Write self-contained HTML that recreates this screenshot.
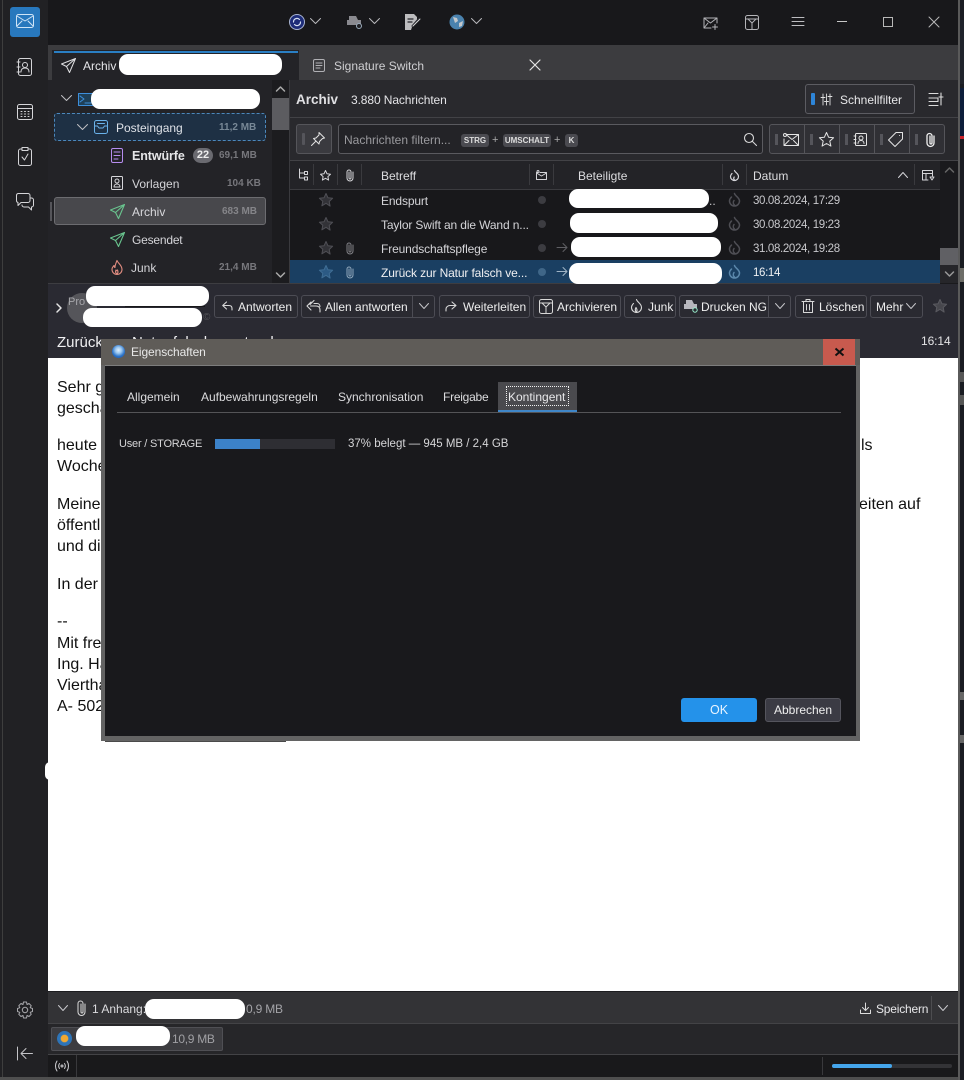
<!DOCTYPE html>
<html lang="de"><head><meta charset="utf-8"><title>Archiv</title>
<style>
*{box-sizing:border-box}
html,body{margin:0;padding:0;width:964px;height:1080px;overflow:hidden;background:#17171a}
body{position:relative;font-family:"Liberation Sans",sans-serif;font-size:12px;color:#e8e8ea}
.b{position:absolute}
.t{position:absolute;white-space:nowrap;line-height:16px;height:16px}
.w{position:absolute;background:#fff;border-radius:9px}
.btn{position:absolute;top:295px;height:23px;border:1px solid #4c4c54;border-radius:3px;background:#2a2a31}
.bt{position:absolute;white-space:nowrap;line-height:16px;top:299px;font-size:12px;color:#eee}
.dim{color:#77777c;font-weight:bold;font-size:10px}
.m{position:absolute;left:57px;font-size:16px;line-height:20px;color:#111;white-space:nowrap}
.kbd{position:absolute;top:134px;height:13px;background:#4a4a50;border-radius:3px;font-size:8px;font-weight:bold;line-height:13px;text-align:center;color:#dcdcdc}
.r{font-size:12px;letter-spacing:-.13px}
.d{font-size:11.5px;letter-spacing:-.35px}
svg{position:absolute;overflow:visible;fill:none;stroke-linecap:round;stroke-linejoin:round}
</style></head><body>

<!-- frame -->
<div class="b" style="left:0;top:0;width:48px;height:1080px;background:#212124"></div>
<div class="b" style="left:2px;top:0;width:1px;height:1080px;background:#3e3e3e"></div>
<div class="b" style="left:48px;top:0;width:910px;height:45px;background:#18181b"></div>
<div class="b" style="left:48px;top:45px;width:910px;height:35px;background:#3c3c3f"></div>
<div class="b" style="left:48px;top:80px;width:224px;height:204px;background:#232327"></div>
<div class="b" style="left:272px;top:80px;width:18px;height:204px;background:#1c1c1f"></div>
<div class="b" style="left:290px;top:80px;width:668px;height:37px;background:#29292d"></div>
<div class="b" style="left:290px;top:117px;width:668px;height:1px;background:#424246"></div>
<div class="b" style="left:290px;top:118px;width:668px;height:42px;background:#29292d"></div>
<div class="b" style="left:290px;top:160px;width:668px;height:1px;background:#424246"></div>
<div class="b" style="left:290px;top:161px;width:668px;height:29px;background:#232327"></div>
<div class="b" style="left:290px;top:189px;width:650px;height:1px;background:#3b3b3f"></div>
<div class="b" style="left:290px;top:190px;width:668px;height:94px;background:#18181b"></div>
<div class="b" style="left:48px;top:283px;width:910px;height:1px;background:#3d3d41"></div>
<div class="b" style="left:48px;top:284px;width:910px;height:74px;background:#2a2a32"></div>
<div class="b" style="left:48px;top:358px;width:910px;height:633px;background:#fff"></div>
<div class="b" style="left:48px;top:991px;width:910px;height:33px;background:#333336;border-top:1px solid #1d1d20"></div>
<div class="b" style="left:48px;top:1023px;width:910px;height:32px;background:#262629;border-top:1px solid #434346"></div>
<div class="b" style="left:48px;top:1054px;width:910px;height:23px;background:#19191b;border-top:1px solid #434346"></div>
<div class="b" style="left:0;top:1077px;width:964px;height:3px;background:#4f4f4f"></div>
<div class="b" style="left:958px;top:0;width:2px;height:1080px;background:#5a5a5a"></div>
<div class="b" style="left:960px;top:0;width:4px;height:1080px;background:#1a1c22"></div>
<div class="b" style="left:960px;top:20px;width:4px;height:64px;background:#20232b"></div>
<div class="b" style="left:960px;top:88px;width:4px;height:50px;background:#0d1d3a"></div>
<div class="b" style="left:960px;top:136px;width:4px;height:3px;background:#c8202a"></div>
<div class="b" style="left:960px;top:268px;width:4px;height:14px;background:#6d6d68"></div>
<div class="b" style="left:960px;top:372px;width:4px;height:10px;background:#565656"></div>
<div class="b" style="left:960px;top:395px;width:4px;height:10px;background:#565656"></div>
<div class="b" style="left:960px;top:692px;width:4px;height:8px;background:#666"></div>
<div class="b" style="left:960px;top:735px;width:4px;height:8px;background:#666"></div>

<!-- spaces bar -->
<div class="b" style="left:10px;top:7px;width:30px;height:30px;background:#2878bd;border-radius:3px"></div>
<svg style="left:16px;top:14px" width="18" height="16" stroke="#cfe4f6" stroke-width="1"><rect x=".5" y=".5" width="17" height="13" rx="2"/><path d="M1 2l8 5 8-5M1 12l5-5M17 12l-5-5"/></svg>
<svg style="left:17px;top:58px" width="16" height="18" stroke="#d5d5d8" stroke-width="1"><rect x="1.500" y=".5" width="13" height="17" rx="2"/><circle cx="8" cy="7" r="2.500"/><path d="M4 14c0-3 2-4 4-4s4 1 4 4M0 4h3M0 9h3M0 14h3"/></svg>
<svg style="left:17px;top:104px" width="16" height="16" stroke="#d5d5d8" stroke-width="1"><rect x=".5" y=".5" width="15" height="15" rx="2"/><path d="M1 4.500h14M4 7.500h1M7.500 7.500h1M11 7.500h1M4 10h1M7.500 10h1M11 10h1M4 12.500h1M7.500 12.500h1M11 12.500h1"/></svg>
<svg style="left:18px;top:147px" width="14" height="19" stroke="#d5d5d8" stroke-width="1"><rect x=".5" y="2" width="13" height="16.500" rx="2"/><rect x="4" y=".5" width="6" height="3" fill="#212124"/><path d="M4 10l2.500 3L10 7"/></svg>
<svg style="left:16px;top:193px" width="18" height="18" stroke="#d5d5d8" stroke-width="1"><path d="M2 .5h10a2 2 0 0 1 2 2v5a2 2 0 0 1-2 2H5l-3 3v-3a2 2 0 0 1-1.500-2v-5a2 2 0 0 1 1.500-2z"/><path d="M14 5h1.500a2 2 0 0 1 2 2v5a2 2 0 0 1-2 2v3l-3-3H8a2 2 0 0 1-2-2"/></svg>
<svg style="left:16px;top:1001px" width="18" height="18" stroke="#a8a8ac" stroke-width="1"><path d="M7.500 1h3l.5 2.500 2-1 2.200 2.200-1 2 2.300.800v3l-2.300.8 1 2-2.200 2.200-2-1-.5 2.500h-3l-.5-2.500-2 1L2.800 13.300l1-2L1.500 10.500v-3l2.300-.8-1-2L5 2.500l2 1z"/><circle cx="9" cy="9" r="2.700"/></svg>
<svg style="left:17px;top:1047px" width="16" height="14" stroke="#c4c4c8" stroke-width="1"><path d="M.5 0v13M15.500 6.500H4M9 1.500l-5 5 5 5"/></svg>

<!-- top bar icons -->
<svg style="left:289px;top:14px" width="16" height="16"><circle cx="8" cy="8" r="7.500" fill="#1d2c78" stroke="#a9b4d2"/><path d="M4.500 8a3.500 3.500 0 0 1 6-2.500M11.500 8a3.500 3.500 0 0 1-6 2.500" stroke="#d5def2" stroke-width="1.200"/></svg>
<svg style="left:310px;top:18px" width="11" height="7" stroke="#b8b8bc"><path d="M.5.500l5 5 5-5"/></svg>
<svg style="left:346px;top:14px" width="17" height="16"><path d="M3 2h7l2 4h3v5H1V6h2z" fill="#8a8a90"/><circle cx="13" cy="12" r="2.500" fill="#202024" stroke="#9ab"/></svg>
<svg style="left:369px;top:18px" width="11" height="7" stroke="#b8b8bc"><path d="M.5.500l5 5 5-5"/></svg>
<svg style="left:405px;top:14px" width="17" height="16"><path d="M0 0h9l3 3v4l-5 6-1 3H0z" fill="#bdbdbf"/><path d="M7 12l7-8M3 5h5M3 8h4" stroke="#24242a" stroke-width="1.200"/><path d="M8 12l7-7" stroke="#d8d8d8"/></svg>
<svg style="left:449px;top:14px" width="16" height="16"><circle cx="8" cy="8" r="7.500" fill="#4a82ae"/><path d="M4 3l4 1 1 3-3 2zM10 9l4-2-1 5-3 1z" fill="#c4c8cc"/></svg>
<svg style="left:471px;top:18px" width="11" height="7" stroke="#b8b8bc"><path d="M.5.500l5 5 5-5"/></svg>
<svg style="left:703px;top:17px" width="15" height="13" stroke="#b4b4b8"><path d="M14 6V1H1v10h7M1 1l6.500 5L14 1M1 11l4-5"/><path d="M12 7.500v5M9.500 10h5"/></svg>
<svg style="left:745px;top:15px" width="14" height="15" stroke="#b4b4b8"><rect x=".5" y=".5" width="13" height="14" rx="2"/><path d="M.5 4h13M3 4l4 4 4-4M7 8v6"/></svg>
<svg style="left:792px;top:17px" width="12" height="10" stroke="#bcbcc0"><path d="M0 .5h12M0 4.500h12M0 8.500h12"/></svg>
<div class="b" style="left:837px;top:21px;width:10px;height:1px;background:#c8c8c8"></div>
<div class="b" style="left:883px;top:17px;width:10px;height:10px;border:1px solid #b8b8b8"></div>
<svg style="left:929px;top:17px" width="10" height="10" stroke="#b8b8b8"><path d="M0 0l10 10M10 0L0 10"/></svg>

<!-- tabs -->
<div class="b" style="left:52px;top:50px;width:247px;height:30px;background:#232327"></div>
<div class="b" style="left:54px;top:51px;width:244px;height:2px;background:#2a7fc4"></div>
<svg style="left:61px;top:58px" width="15" height="15" stroke="#dedee0" stroke-width="1"><path d="M14.500.500L.5 6l5 2.500L8.500 14.500zM5.500 8.500L14.500.500"/></svg>
<div class="t" style="left:83px;top:58px;font-size:12px;color:#e5e5e8">Archiv</div>
<svg style="left:313px;top:59px" width="12" height="13" stroke="#b0b0b4"><rect x=".5" y=".5" width="11" height="12" rx="1.500"/><path d="M3 4h6M3 6.500h6M3 9h4"/></svg>
<div class="t" style="left:334px;top:58px;font-size:12px;color:#cfcfd2">Signature Switch</div>
<svg style="left:530px;top:60px" width="10" height="10" stroke="#e4e4e4" stroke-width="1.200"><path d="M0 0l10 10M10 0L0 10"/></svg>
<div class="w" style="left:119px;top:54px;width:163px;height:21px"></div>

<!-- folder pane -->
<div class="b" style="left:54px;top:113px;width:212px;height:28px;background:#1e3044;border:1px dashed #4c88bc;border-radius:3px"></div>
<div class="b" style="left:54px;top:197px;width:212px;height:28px;background:#48484c;border:1px solid #6c6c70;border-radius:3px"></div>
<div class="b" style="left:50px;top:202px;width:2px;height:19px;background:#55555a"></div>
<svg style="left:61px;top:95px" width="11" height="7" stroke="#c0c0c4"><path d="M.5.500l5 5 5-5"/></svg>
<svg style="left:78px;top:93px" width="16" height="13" stroke="#3d8fdc"><rect x=".5" y=".5" width="15" height="12" fill="#1f4058"/><path d="M2 3l4 3-4 3M7 10h6"/></svg>
<div class="w" style="left:91px;top:89px;width:169px;height:20px"></div>
<svg style="left:77px;top:124px" width="11" height="7" stroke="#c0c0c4"><path d="M.5.500l5 5 5-5"/></svg>
<svg style="left:94px;top:120px" width="14" height="14" stroke="#6ab2ea" stroke-width="1"><rect x=".5" y=".5" width="13" height="13" rx="2"/><path d="M.5 6h3l1.500 2h4l1.500-2h3M3.500 3.500h7"/></svg>
<div class="t" style="left:116px;top:120px;font-size:12px;color:#dfe2e8">Posteingang</div>
<div class="t dim" style="left:219px;top:120px;color:#788896">11,2 MB</div>
<svg style="left:111px;top:148px" width="12" height="15" stroke="#b78df0" stroke-width="1"><rect x=".5" y=".5" width="11" height="14" rx="1.500"/><path d="M3 4h6M3 7.500h6M3 11h4"/></svg>
<div class="t" style="left:132px;top:148px;font-size:12.500px;letter-spacing:-.1px;font-weight:bold;color:#e6e6e8">Entwürfe</div>
<div class="b" style="left:193px;top:148px;width:20px;height:15px;border-radius:8px;background:#6a6a70;color:#eee;font-size:11px;font-weight:bold;line-height:15px;text-align:center">22</div>
<div class="t dim" style="left:219px;top:148px">69,1 MB</div>
<svg style="left:111px;top:176px" width="12" height="14" stroke="#d6d6da" stroke-width="1"><rect x=".5" y=".5" width="11" height="13" rx="1"/><circle cx="6" cy="5" r="2"/><path d="M3 11c0-2 1.500-3 3-3s3 1 3 3z"/></svg>
<div class="t" style="left:132px;top:176px;font-size:12px;color:#d4d4d8">Vorlagen</div>
<div class="t dim" style="left:227px;top:176px">104 KB</div>
<svg style="left:110px;top:204px" width="15" height="15" stroke="#69c48e" stroke-width="1.100"><path d="M14.500.500L.5 6l5 2.500L8.500 14.500zM5.500 8.500L14.500.500"/></svg>
<div class="t" style="left:132px;top:204px;font-size:12px;color:#d8d8dc">Archiv</div>
<div class="t dim" style="left:222px;top:204px;color:#858589">683 MB</div>
<svg style="left:110px;top:232px" width="15" height="15" stroke="#69c48e" stroke-width="1.100"><path d="M14.500.500L.5 6l5 2.500L8.500 14.500zM5.500 8.500L14.500.500"/></svg>
<div class="t" style="left:132px;top:232px;font-size:12px;letter-spacing:-.2px;color:#d4d4d8">Gesendet</div>
<svg style="left:111px;top:260px" width="12" height="15" stroke="#e08c80" stroke-width="1.100"><path d="M6 .5c1 3 5 4.500 5 9a5 5 0 0 1-10 0c0-2 1-3 2-4 0 1 .5 2 1 2C4 5 5 3 6 .5zM6 14c-1.500-1-2-2-1-4 .5 1 1 1 1.500 0 1 2 .5 3-.5 4z"/></svg>
<div class="t" style="left:131px;top:260px;font-size:12px;color:#d4d4d8">Junk</div>
<div class="t dim" style="left:219px;top:260px">21,4 MB</div>
<!-- folder scrollbar -->
<div class="b" style="left:272px;top:98px;width:17px;height:32px;background:#5c5c60"></div>
<svg style="left:276px;top:86px" width="9" height="6" stroke="#aaa" stroke-width="1.500"><path d="M.5 5L4.500 1l4 4"/></svg>
<svg style="left:276px;top:272px" width="9" height="6" stroke="#aaa" stroke-width="1.500"><path d="M.5 1l4 4 4-4"/></svg>
<div class="b" style="left:289px;top:80px;width:1px;height:204px;background:#3a3a3e"></div>

<!-- thread pane header -->
<div class="t" style="left:296px;top:92px;font-size:13.500px;font-weight:bold;color:#e0e0e3">Archiv</div>
<div class="t" style="left:351px;top:92px;font-size:12px;letter-spacing:-.1px;color:#e4e4e7">3.880 Nachrichten</div>
<div class="b" style="left:805px;top:84px;width:110px;height:30px;border:1px solid #5c5c62;border-radius:3px;background:#2d2d32"></div>
<div class="b" style="left:811px;top:93px;width:4px;height:12px;background:#2e85d8;border-radius:1px"></div>
<svg style="left:821px;top:94px" width="11" height="11" stroke="#dedede" stroke-width=".9"><path d="M2 0v11M5.500 0v11M9 0v11M0 3.500h4M3.500 7.500h4M7 2.500h4"/></svg>
<div class="t" style="left:840px;top:92px;font-size:12px;color:#e8e8ea">Schnellfilter</div>
<svg style="left:929px;top:93px" width="14" height="13" stroke="#dcdcdc" stroke-width="1.100"><path d="M0 .5h9M0 12.500h9M0 5h9v3.500H0M12 0v12M10 4h4"/></svg>

<!-- filter bar -->
<div class="b" style="left:296px;top:124px;width:36px;height:30px;background:#3a3a3f;border:1px solid #55555a;border-radius:3px"></div>
<div class="b" style="left:302px;top:133px;width:3px;height:12px;background:#55555b;border-radius:1px"></div>
<svg style="left:311px;top:132px" width="14" height="14" stroke="#e2e2e2"><path d="M8 .5l5.500 5.500-2 .5-3 3-.5 2.500L2.500 6.500 5 6l3-3zM5 9l-4.500 4.500"/></svg>
<div class="b" style="left:338px;top:124px;width:425px;height:30px;background:#232327;border:1px solid #5a5a5f;border-radius:3px"></div>
<div class="t" style="left:344px;top:132px;font-size:12px;color:#9a9a9e">Nachrichten filtern...</div>
<div class="kbd" style="left:461px;width:28px">STRG</div>
<div class="t" style="left:492px;top:132px;font-size:11px;color:#aaa">+</div>
<div class="kbd" style="left:503px;width:48px">UMSCHALT</div>
<div class="t" style="left:554px;top:132px;font-size:11px;color:#aaa">+</div>
<div class="kbd" style="left:565px;width:13px">K</div>
<svg style="left:744px;top:133px" width="13" height="13" stroke="#d8d8d8" stroke-width="1.100"><circle cx="5" cy="5" r="4.500"/><path d="M8.500 8.500L12.500 12.500"/></svg>
<div class="b" style="left:769px;top:124px;width:176px;height:30px;background:#303035;border:1px solid #55555a;border-radius:3px"></div>
<div class="b" style="left:804px;top:125px;width:1px;height:28px;background:#55555a"></div>
<div class="b" style="left:839px;top:125px;width:1px;height:28px;background:#55555a"></div>
<div class="b" style="left:874px;top:125px;width:1px;height:28px;background:#55555a"></div>
<div class="b" style="left:909px;top:125px;width:1px;height:28px;background:#55555a"></div>
<div class="b" style="left:775px;top:134px;width:3px;height:11px;background:#55555b"></div>
<div class="b" style="left:810px;top:134px;width:3px;height:11px;background:#55555b"></div>
<div class="b" style="left:845px;top:134px;width:3px;height:11px;background:#55555b"></div>
<div class="b" style="left:880px;top:134px;width:3px;height:11px;background:#55555b"></div>
<div class="b" style="left:915px;top:134px;width:3px;height:11px;background:#55555b"></div>
<svg style="left:783px;top:133px" width="16" height="13" stroke="#e4e4e4"><path d="M3 1.500h12.500v11H1V6M3 1.500l6 5 6.500-5M1 12.500l5-5M15.500 12.500l-5-5"/><circle cx="2" cy="2" r="1.500"/></svg>
<svg style="left:819px;top:132px" width="15" height="15" stroke="#e4e4e4"><path d="M7.500.5l2.100 4.700 5 .5-3.800 3.400 1.100 5-4.400-2.600-4.400 2.600 1.100-5L.4 5.700l5-.5z"/></svg>
<svg style="left:854px;top:133px" width="13" height="13" stroke="#e4e4e4"><rect x="1.500" y=".5" width="11" height="12" rx="1"/><circle cx="7" cy="5" r="2"/><path d="M4 10.500c0-2 1.500-3 3-3s3 1 3 3M0 3h2M0 6.500h2M0 10h2"/></svg>
<svg style="left:888px;top:132px" width="15" height="15" stroke="#e4e4e4"><path d="M8 .5h6.500V7L7 14.500.5 8zM11.500 3.500h.1"/></svg>
<svg style="left:926px;top:132px" width="10" height="15" stroke="#f0f0f0" stroke-width="1.300"><path d="M8 4v7a3.500 3.500 0 0 1-7 0V4a2.500 2.500 0 0 1 5 0v7a1 1 0 0 1-2 0V4"/></svg>

<!-- column header -->
<svg style="left:298px;top:169px" width="11" height="13" stroke="#d4d4d8"><path d="M1.500 0v9h5M1.500 4h5"/><rect x="6.500" y="2.500" width="3" height="3"/><rect x="6.500" y="8" width="3" height="3"/></svg>
<svg style="left:320px;top:170px" width="11" height="11" stroke="#d4d4d8"><path d="M5.500.5l1.500 3.300 3.500.4-2.600 2.400.7 3.500-3.100-1.800-3.100 1.800.7-3.500L.5 4.200 4 3.800z"/></svg>
<svg style="left:346px;top:169px" width="8" height="13" stroke="#d4d4d8"><path d="M7 3v6a3 3 0 0 1-6 0V3a2 2 0 0 1 4 0v6a1 1 0 0 1-2 0V3"/></svg>
<div class="b" style="left:313px;top:164px;width:1px;height:21px;background:#3a3a3e"></div>
<div class="b" style="left:337px;top:164px;width:1px;height:21px;background:#3a3a3e"></div>
<div class="b" style="left:361px;top:164px;width:1px;height:21px;background:#3a3a3e"></div>
<div class="t" style="left:381px;top:168px;font-size:12px;color:#dcdcdf">Betreff</div>
<div class="b" style="left:529px;top:164px;width:1px;height:21px;background:#3a3a3e"></div>
<div class="b" style="left:553px;top:164px;width:1px;height:21px;background:#3a3a3e"></div>
<svg style="left:536px;top:170px" width="11" height="10" stroke="#d4d4d8"><path d="M2 2.500H.5v7h10v-7H4M.5 3l5 3 5-3"/><circle cx="2" cy="1.500" r="1"/></svg>
<div class="t" style="left:578px;top:168px;font-size:12px;color:#dcdcdf">Beteiligte</div>
<div class="b" style="left:722px;top:164px;width:1px;height:21px;background:#3a3a3e"></div>
<div class="b" style="left:746px;top:164px;width:1px;height:21px;background:#3a3a3e"></div>
<svg style="left:730px;top:170px" width="9" height="11" stroke="#d4d4d8" stroke-width="1.200"><path d="M4.500.5c.5 2 4 3 4 6a4 4 0 0 1-8 0c0-1.500.8-2 1.500-3M4.500 10c-1-1-1-2-.3-3"/></svg>
<div class="t" style="left:753px;top:168px;font-size:12px;color:#dcdcdf">Datum</div>
<svg style="left:898px;top:172px" width="10" height="6" stroke="#d4d4d8"><path d="M.5 5.500l4.500-5 4.500 5"/></svg>
<div class="b" style="left:914px;top:164px;width:1px;height:21px;background:#3a3a3e"></div>
<svg style="left:922px;top:170px" width="12" height="11" stroke="#d4d4d8"><path d="M6 10H.5V.5h10V6M.5 3.500h10M4 3.500V10M8 7h4l-2 3z"/></svg>

<!-- rows -->
<div class="b" style="left:290px;top:260px;width:650px;height:23px;background:#1a3f62"></div>

<svg style="left:319px;top:193px" width="14" height="14" stroke="#4f4f55"><path d="M7 .5l2 4.300 4.600.5-3.400 3.200.9 4.600L7 10.300l-4.100 2.500.9-4.600L.4 5.300 5 4.800z" fill="#323237"/></svg>
<svg style="left:319px;top:217px" width="14" height="14" stroke="#4f4f55"><path d="M7 .5l2 4.300 4.600.5-3.400 3.200.9 4.600L7 10.300l-4.100 2.500.9-4.600L.4 5.300 5 4.800z" fill="#323237"/></svg>
<svg style="left:319px;top:241px" width="14" height="14" stroke="#4f4f55"><path d="M7 .5l2 4.300 4.600.5-3.400 3.200.9 4.600L7 10.300l-4.100 2.500.9-4.600L.4 5.300 5 4.800z" fill="#323237"/></svg>
<svg style="left:319px;top:265px" width="14" height="14" stroke="#3f6d94"><path d="M7 .5l2 4.300 4.600.5-3.400 3.200.9 4.600L7 10.300l-4.100 2.500.9-4.600L.4 5.300 5 4.800z" fill="#2c5a84"/></svg>
<svg style="left:346px;top:242px" width="8" height="13" stroke="#808086"><path d="M7 3v6a3 3 0 0 1-6 0V3a2 2 0 0 1 4 0v6a1 1 0 0 1-2 0V3"/></svg>
<svg style="left:346px;top:266px" width="8" height="13" stroke="#8fa6ba"><path d="M7 3v6a3 3 0 0 1-6 0V3a2 2 0 0 1 4 0v6a1 1 0 0 1-2 0V3"/></svg>
<div class="t r" style="left:381px;top:193px;color:#d4d4d8">Endspurt</div>
<div class="t r" style="left:381px;top:217px;color:#d4d4d8">Taylor Swift an die Wand n...</div>
<div class="t r" style="left:381px;top:241px;color:#d4d4d8">Freundschaftspflege</div>
<div class="t r" style="left:381px;top:265px;color:#f0f0f2">Zurück zur Natur falsch ve...</div>
<div class="b" style="left:538px;top:196px;width:8px;height:8px;border-radius:50%;background:#3c3c41"></div>
<div class="b" style="left:538px;top:220px;width:8px;height:8px;border-radius:50%;background:#3c3c41"></div>
<div class="b" style="left:538px;top:244px;width:8px;height:8px;border-radius:50%;background:#3c3c41"></div>
<div class="b" style="left:538px;top:268px;width:8px;height:8px;border-radius:50%;background:#3f6688"></div>
<svg style="left:557px;top:243px" width="11" height="9" stroke="#5f5f64"><path d="M0 4.500h10M6 .5l4 4-4 4"/></svg>
<svg style="left:557px;top:267px" width="11" height="9" stroke="#9fb4c6"><path d="M0 4.500h10M6 .5l4 4-4 4"/></svg>
<div class="t" style="left:709px;top:193px;font-size:12px;color:#c8c8cc">..</div>
<svg style="left:729px;top:193px" width="11" height="13" stroke="#4e4e54" stroke-width="1.500"><path d="M5.500.5c.5 2.500 5 4 5 7.500a5 5 0 0 1-10 0c0-2 1-3 2-4M5.500 12c-1.500-1-1.500-3-.5-4.500"/></svg>
<svg style="left:729px;top:217px" width="11" height="13" stroke="#4e4e54" stroke-width="1.500"><path d="M5.500.5c.5 2.500 5 4 5 7.500a5 5 0 0 1-10 0c0-2 1-3 2-4M5.500 12c-1.500-1-1.500-3-.5-4.500"/></svg>
<svg style="left:729px;top:241px" width="11" height="13" stroke="#4e4e54" stroke-width="1.500"><path d="M5.500.5c.5 2.500 5 4 5 7.500a5 5 0 0 1-10 0c0-2 1-3 2-4M5.500 12c-1.500-1-1.500-3-.5-4.500"/></svg>
<svg style="left:729px;top:265px" width="11" height="13" stroke="#5b87ab" stroke-width="1.500"><path d="M5.500.5c.5 2.500 5 4 5 7.500a5 5 0 0 1-10 0c0-2 1-3 2-4M5.500 12c-1.500-1-1.500-3-.5-4.500"/></svg>
<div class="t d" style="left:753px;top:193px;color:#c8c8cc">30.08.2024, 17:29</div>
<div class="t d" style="left:753px;top:217px;color:#c8c8cc">30.08.2024, 19:23</div>
<div class="t d" style="left:753px;top:241px;color:#c8c8cc">31.08.2024, 19:28</div>
<div class="t d" style="left:753px;top:265px;color:#eef0f2">16:14</div>
<div class="w" style="left:569px;top:189px;width:140px;height:19px"></div>
<div class="w" style="left:570px;top:213px;width:148px;height:20px"></div>
<div class="w" style="left:571px;top:237px;width:150px;height:20px"></div>
<div class="w" style="left:569px;top:263px;width:153px;height:21px"></div>
<!-- thread scrollbar -->
<div class="b" style="left:940px;top:161px;width:18px;height:123px;background:#1a1a1d"></div>
<div class="b" style="left:940px;top:248px;width:18px;height:17px;background:#606064"></div>
<div class="b" style="left:940px;top:265px;width:18px;height:18px;background:#26262a"></div>
<svg style="left:945px;top:167px" width="9" height="6" stroke="#666" stroke-width="1.500"><path d="M.5 5L4.500 1l4 4"/></svg>
<svg style="left:945px;top:271px" width="9" height="6" stroke="#999" stroke-width="1.500"><path d="M.5 1l4 4 4-4"/></svg>

<!-- message header -->
<svg style="left:56px;top:303px" width="7" height="10" stroke="#e4e4e4" stroke-width="1.500"><path d="M1 1l4 4-4 4"/></svg>
<div class="b" style="left:67px;top:293px;width:30px;height:30px;border-radius:50%;background:#55555a"></div>
<div class="t" style="left:68px;top:294px;font-size:11px;color:#a8a8ac">Pro</div>
<div class="w" style="left:86px;top:286px;width:123px;height:20px"></div>
<div class="b" style="left:125px;top:306px;width:80px;height:1px;background:#18181a"></div>
<div class="w" style="left:83px;top:308px;width:119px;height:19px"></div>
<div class="t" style="left:203px;top:310px;font-size:10px;color:#55555a">©</div>

<div class="btn" style="left:214px;width:84px"></div>
<svg style="left:222px;top:301px" width="11" height="11" stroke="#d8d8d8" stroke-width="1.100"><path d="M4.500 1L.7 4.500 4.500 8M1 4.500h6c2 0 3 1 3 3v1.500"/></svg>
<div class="bt" style="left:238px">Antworten</div>
<div class="btn" style="left:301px;width:134px"></div>
<div class="b" style="left:412px;top:296px;width:1px;height:21px;background:#4c4c54"></div>
<svg style="left:306px;top:300px" width="15" height="13" stroke="#d8d8d8" stroke-width="1.100"><path d="M5 2L1 6l4 4M8 .5L4 4.500M4.500 6H10c3 0 4 2 4 4v2M8 3.500h3c2 0 3 1.500 3 3"/></svg>
<div class="bt" style="left:325px">Allen antworten</div>
<svg style="left:419px;top:303px" width="10" height="6" stroke="#c4c4c8"><path d="M.5.500l4.500 5 4.500-5"/></svg>
<div class="btn" style="left:439px;width:91px"></div>
<svg style="left:445px;top:301px" width="12" height="11" stroke="#d8d8d8" stroke-width="1.100"><path d="M7 1l4 3.500L7 8M11 4.500H5C3 4.500 1 6 1 8v2"/></svg>
<div class="bt" style="left:463px">Weiterleiten</div>
<div class="btn" style="left:533px;width:88px"></div>
<svg style="left:539px;top:299px" width="14" height="15" stroke="#d8d8d8"><rect x=".5" y=".5" width="13" height="14" rx="2"/><path d="M.5 4h13M3 4l4 4 4-4M7 8v6"/></svg>
<div class="bt" style="left:557px">Archivieren</div>
<div class="btn" style="left:624px;width:52px"></div>
<svg style="left:631px;top:299px" width="11" height="14" stroke="#d8d8d8" stroke-width="1.100"><path d="M5.500.5c.5 2.500 5 4 5 8a5 5 0 0 1-10 0c0-2 1-3 2-4M5.500 13c-1.500-1-1.500-3-.5-4.500 1 1.500 1.500 3 .5 4.500z"/></svg>
<div class="bt" style="left:648px">Junk</div>
<div class="btn" style="left:679px;width:112px"></div>
<div class="b" style="left:768px;top:296px;width:1px;height:21px;background:#4c4c54"></div>
<svg style="left:684px;top:299px" width="14" height="14"><path d="M2 1h6l2 4h3v5H0V5h2z" fill="#b6b6bc"/><circle cx="11" cy="11" r="2.200" fill="#2a2a31" stroke="#9ec"/></svg>
<div class="bt" style="left:701px">Drucken NG</div>
<svg style="left:775px;top:303px" width="10" height="6" stroke="#c4c4c8"><path d="M.5.500l4.500 5 4.500-5"/></svg>
<div class="btn" style="left:795px;width:72px"></div>
<svg style="left:802px;top:299px" width="12" height="14" stroke="#d8d8d8"><path d="M0 2.500h12M4 2.500V.5h4v2M1.500 2.500V13.500h9V2.500M4.500 5.500v5.500M7.500 5.500v5.500"/></svg>
<div class="bt" style="left:819px">Löschen</div>
<div class="btn" style="left:870px;width:53px"></div>
<div class="bt" style="left:876px">Mehr</div>
<svg style="left:906px;top:303px" width="10" height="6" stroke="#c4c4c8"><path d="M.5.500l4.500 5 4.500-5"/></svg>
<svg style="left:933px;top:299px" width="14" height="14" stroke="#5a5a60"><path d="M7 .5l2 4.300 4.600.5-3.400 3.200.9 4.600L7 10.300l-4.100 2.500.9-4.600L.4 5.300 5 4.800z" fill="#47474d"/></svg>
<div class="t" style="left:57px;top:334px;font-size:15px;height:18px;line-height:18px;color:#f0f0f2">Zurück zur Natur falsch verstanden</div>
<div class="t" style="left:921px;top:333px;font-size:12px;letter-spacing:-.1px;color:#e4e4e6">16:14</div>

<!-- message body -->
<div class="m" style="top:378px">Sehr geehrte Damen und Herren,</div>
<div class="m" style="top:399px">geschätzte Kolleginnen und Kollegen</div>
<div class="m" style="top:436px">heute</div>
<div class="m" style="top:457px">Wochenende</div>
<div class="m" style="top:495px">Meine Frau und ich</div>
<div class="m" style="top:516px">öffentlichen Wegen</div>
<div class="m" style="top:537px">und die Natur</div>
<div class="m" style="top:575px">In der</div>
<div class="m" style="top:612px">--</div>
<div class="m" style="top:634px">Mit freundlichen</div>
<div class="m" style="top:655px">Ing. Hans</div>
<div class="m" style="top:676px">Vierthaler</div>
<div class="m" style="top:697px">A- 5020 Salzburg</div>
<div class="m" style="top:436px;left:861px">ls</div>
<div class="m" style="top:495px;left:859px">eiten auf</div>
<div class="b" style="left:45px;top:762px;width:10px;height:18px;background:#fff;border-radius:5px"></div>

<!-- attachments -->
<svg style="left:58px;top:1005px" width="10" height="6" stroke="#c8c8cc"><path d="M.5.500l4.500 5 4.500-5"/></svg>
<svg style="left:77px;top:1000px" width="9" height="16" stroke="#dcdcdc"><path d="M8 4v8a3.500 3.500 0 0 1-7 0V3.500a2.500 2.500 0 0 1 5 0V12a1 1 0 0 1-2 0V4"/></svg>
<div class="t" style="left:92px;top:1001px;font-size:12px;color:#dcdcdf">1 Anhang:</div>
<div class="t" style="left:246px;top:1001px;font-size:12px;letter-spacing:-.2px;color:#a4a4a8">0,9 MB</div>
<div class="w" style="left:145px;top:999px;width:100px;height:20px"></div>
<svg style="left:860px;top:1003px" width="11" height="11" stroke="#dcdcdc"><path d="M5.500 0v7M2.500 4.500l3 3 3-3M.5 7v3.500h10V7"/></svg>
<div class="t" style="left:876px;top:1001px;font-size:12px;letter-spacing:-.2px;color:#e8e8ea">Speichern</div>
<div class="b" style="left:931px;top:996px;width:1px;height:24px;background:#4d4d50"></div>
<svg style="left:938px;top:1005px" width="10" height="6" stroke="#c8c8cc"><path d="M.5.500l4.500 5 4.500-5"/></svg>
<div class="b" style="left:51px;top:1027px;width:172px;height:24px;background:#3c3c40;border:1px solid #4f4f54;border-radius:2px"></div>
<div class="b" style="left:57px;top:1031px;width:15px;height:15px;border-radius:50%;background:radial-gradient(circle,#f0a830 0,#f0a830 32%,#2d74b8 40%,#2d74b8 100%)"></div>
<div class="t" style="left:172px;top:1031px;font-size:12px;letter-spacing:-.3px;color:#a0a0a4">10,9 MB</div>
<div class="w" style="left:76px;top:1026px;width:94px;height:20px"></div>

<!-- status -->
<svg style="left:54px;top:1060px" width="16" height="12" stroke="#d0d0d4"><path d="M3 1C1 4 1 8 3 11M13 1c2 3 2 7 0 10M5.500 3.500c-1 1.500-1 3.500 0 5M10.500 3.500c1 1.500 1 3.500 0 5"/><circle cx="8" cy="6" r="1"/></svg>
<div class="b" style="left:76px;top:1055px;width:1px;height:22px;background:#39393c"></div>
<div class="b" style="left:822px;top:1057px;width:1px;height:18px;background:#39393c"></div>
<div class="b" style="left:832px;top:1064px;width:120px;height:4px;background:#333336;border-radius:2px"></div>
<div class="b" style="left:832px;top:1064px;width:60px;height:4px;background:#45a6ec;border-radius:2px"></div>

<!-- dialog -->
<div class="b" style="left:101px;top:339px;width:759px;height:402px;background:#636363"></div>
<div class="b" style="left:101px;top:339px;width:759px;height:26px;background:#5f5c58"></div>
<div class="b" style="left:105px;top:365px;width:751px;height:371px;background:#19191c;border-top:1px solid #7d7d7d"></div>
<div class="b" style="left:105px;top:741px;width:181px;height:1px;background:#4a4a4a"></div>
<div class="b" style="left:823px;top:339px;width:32px;height:26px;background:#c85a4e"></div>
<svg style="left:835px;top:348px;stroke-linecap:butt" width="9" height="8" stroke="#111" stroke-width="2"><path d="M.5.500l8 7M8.500.500l-8 7"/></svg>
<div class="b" style="left:112px;top:345px;width:13px;height:13px;border-radius:50%;background:radial-gradient(circle at 50% 40%,#dff0ff 0,#9cc8f0 30%,#2a72c8 62%,#1c4f9e 100%)"></div>
<div class="t" style="left:131px;top:344px;font-size:12px;letter-spacing:-.1px;color:#e8e8e8">Eigenschaften</div>

<div class="t" style="left:127px;top:389px;font-size:12px;color:#dcdcde">Allgemein</div>
<div class="t" style="left:201px;top:389px;font-size:12px;color:#dcdcde">Aufbewahrungsregeln</div>
<div class="t" style="left:338px;top:389px;font-size:12px;color:#dcdcde">Synchronisation</div>
<div class="t" style="left:443px;top:389px;font-size:12px;letter-spacing:-.25px;color:#dcdcde">Freigabe</div>
<div class="b" style="left:117px;top:412px;width:724px;height:1px;background:#545457"></div>
<div class="b" style="left:498px;top:382px;width:79px;height:30px;background:#4a4a4e;border-bottom:2px solid #3f86c8"></div>
<div class="b" style="left:506px;top:386px;width:63px;height:20px;border:1px dotted #f0f0f0;outline:1px dotted #f0f0f0;outline-offset:-1px"></div>
<div class="t" style="left:508px;top:389px;font-size:12px;color:#e8e8ea">Kontingent</div>

<div class="t" style="left:119px;top:436px;font-size:11px;letter-spacing:-.2px;color:#d6d6d8">User / STORAGE</div>
<div class="b" style="left:215px;top:439px;width:120px;height:10px;background:#2e2e33"></div>
<div class="b" style="left:215px;top:439px;width:45px;height:10px;background:#3c82c8"></div>
<div class="t" style="left:348px;top:436px;font-size:11.500px;color:#d6d6d8">37% belegt — 945 MB / 2,4 GB</div>

<div class="b" style="left:681px;top:698px;width:76px;height:24px;background:#2492ea;border-radius:3px;color:#e8f4ff;font-size:12.500px;line-height:24px;text-align:center">OK</div>
<div class="b" style="left:765px;top:698px;width:76px;height:24px;background:#3b3b44;border:1px solid #55555d;border-radius:3px;color:#eee;font-size:12px;line-height:23px;text-align:center">Abbrechen</div>

</body></html>
